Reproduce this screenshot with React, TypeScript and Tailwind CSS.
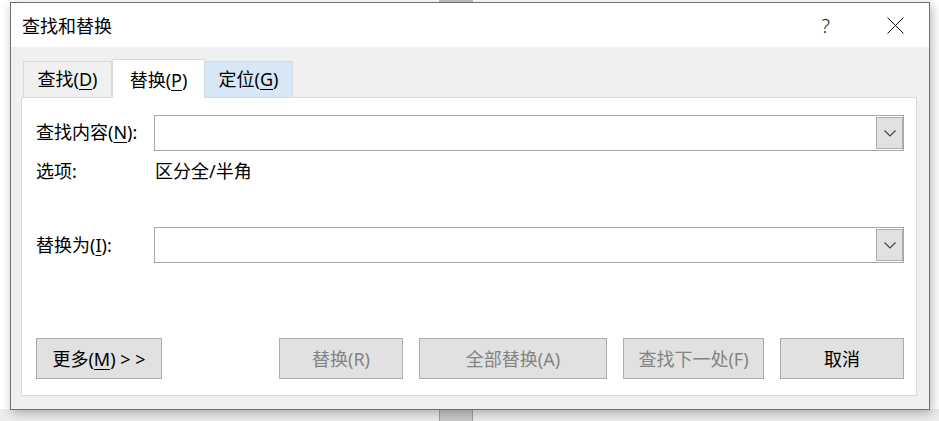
import React from "react";

const font = "font-['Noto_Sans','Noto_Sans_CJK_SC',sans-serif]";

function Chevron() {
  return (
    <svg width="12" height="7" viewBox="0 0 12 7" className="block">
      <path d="M0.5 0.5 L6 6 L11.5 0.5" fill="none" stroke="#404040" strokeWidth="1.1" />
    </svg>
  );
}

function Combo() {
  return (
    <div className="flex-1 h-[36px] border border-[#a8a8a8] bg-white flex justify-end items-stretch py-[1px]">
      <div className="w-[27px] bg-[#e1e1e1] border border-[#adadad] flex items-center justify-center">
        <Chevron />
      </div>
    </div>
  );
}

function Btn({ children, disabled, w }: { children: React.ReactNode; disabled?: boolean; w: string }) {
  return (
    <div
      className={`${w} h-[41px] bg-[#e1e1e1] border border-[#adadad] flex items-center justify-center text-[18px] leading-none ${
        disabled ? "text-[#838383]" : "text-black"
      }`}
    >
      {children}
    </div>
  );
}

export default function App() {
  return (
    <div className={`relative w-[939px] h-[421px] bg-white overflow-hidden ${font}`}>
      {/* background document bits */}
      <div className="absolute left-0 top-[409px] w-[939px] h-[12px] bg-[#ececec]" />
      <div className="absolute left-[439px] top-[409px] w-[34px] h-[12px] bg-[#c9c9c9] border-x border-[#a0a0a0]" />
      <div className="absolute left-[439px] top-0 w-[34px] h-[2px] bg-[#c4c4c4]" />

      {/* dialog */}
      <div className="absolute left-[10px] top-[2px] w-[920px] h-[408px] border border-[#6f6f6f] shadow-[2px_3px_10px_rgba(0,0,0,0.28)] flex flex-col bg-[#f0f0f0]">
        {/* title bar */}
        <div className="h-[44px] bg-white flex items-center pl-[11px] text-[18px] leading-none text-black">
          <span className="pt-[1px]">查找和替换</span>
          <span className="ml-auto text-[20px] text-[#222] font-light mr-[57px] pt-[1px]">?</span>
          <svg width="17" height="17" viewBox="0 0 17 17" className="mr-[25px] mt-[1px]">
            <path d="M0.5 0.5 L16.5 16.5 M16.5 0.5 L0.5 16.5" stroke="#111" strokeWidth="1" fill="none" />
          </svg>
        </div>

        {/* body */}
        <div className="flex-1 pl-[10px] pr-[12px] pt-[11px]">
          {/* tabs */}
          <div className="flex items-end pl-[2px] h-[39px] text-[18px] leading-none text-black">
            <div className="w-[89px] h-[36px] bg-[#f0f0f0] border border-b-0 border-[#d9d9d9] flex items-center justify-center pb-[1px]">
              <span>
                查找(<u className="underline-offset-[3px] decoration-1">D</u>)
              </span>
            </div>
            <div className="relative z-10 w-[93px] h-[39px] bg-white border border-b-0 border-[#d9d9d9] flex items-center justify-center -mb-[1px] pt-[1px]">
              <span>
                替换(<u className="underline-offset-[3px] decoration-1">P</u>)
              </span>
            </div>
            <div className="w-[88px] h-[36px] bg-[#d8e7f6] border border-b-0 border-l-0 border-[#d0dbe6] flex items-center justify-center pb-[1px]">
              <span>
                定位(<u className="underline-offset-[3px] decoration-1">G</u>)
              </span>
            </div>
          </div>

          {/* panel */}
          <div className="h-[299px] bg-white border border-[#d9d9d9] pl-[14px] pr-[12px] pt-[17px] text-[18px] leading-none text-black">
            <div className="flex items-center h-[36px]">
              <div className="w-[118px] pb-[3px]">
                查找内容(<u className="underline-offset-[3px] decoration-1">N</u>):
              </div>
              <Combo />
            </div>
            <div className="flex items-center h-[20px] mt-[10px]">
              <div className="w-[119px]">选项:</div>
              <div>区分全/半角</div>
            </div>
            <div className="flex items-center h-[36px] mt-[46px]">
              <div className="w-[118px] pb-[1px]">
                替换为(<u className="underline-offset-[3px] decoration-1">I</u>):
              </div>
              <Combo />
            </div>
            <div className="flex items-center mt-[75px]">
              <Btn w="w-[126px]">
                <span>
                  更多(<u className="underline-offset-[3px] decoration-1">M</u>) &gt; &gt;
                </span>
              </Btn>
              <div className="ml-auto flex gap-[16px]">
                <Btn w="w-[124px]" disabled>
                  替换(R)
                </Btn>
                <Btn w="w-[188px]" disabled>
                  全部替换(A)
                </Btn>
                <Btn w="w-[141px]" disabled>
                  查找下一处(F)
                </Btn>
                <Btn w="w-[124px]">取消</Btn>
              </div>
            </div>
          </div>
        </div>
      </div>
    </div>
  );
}
